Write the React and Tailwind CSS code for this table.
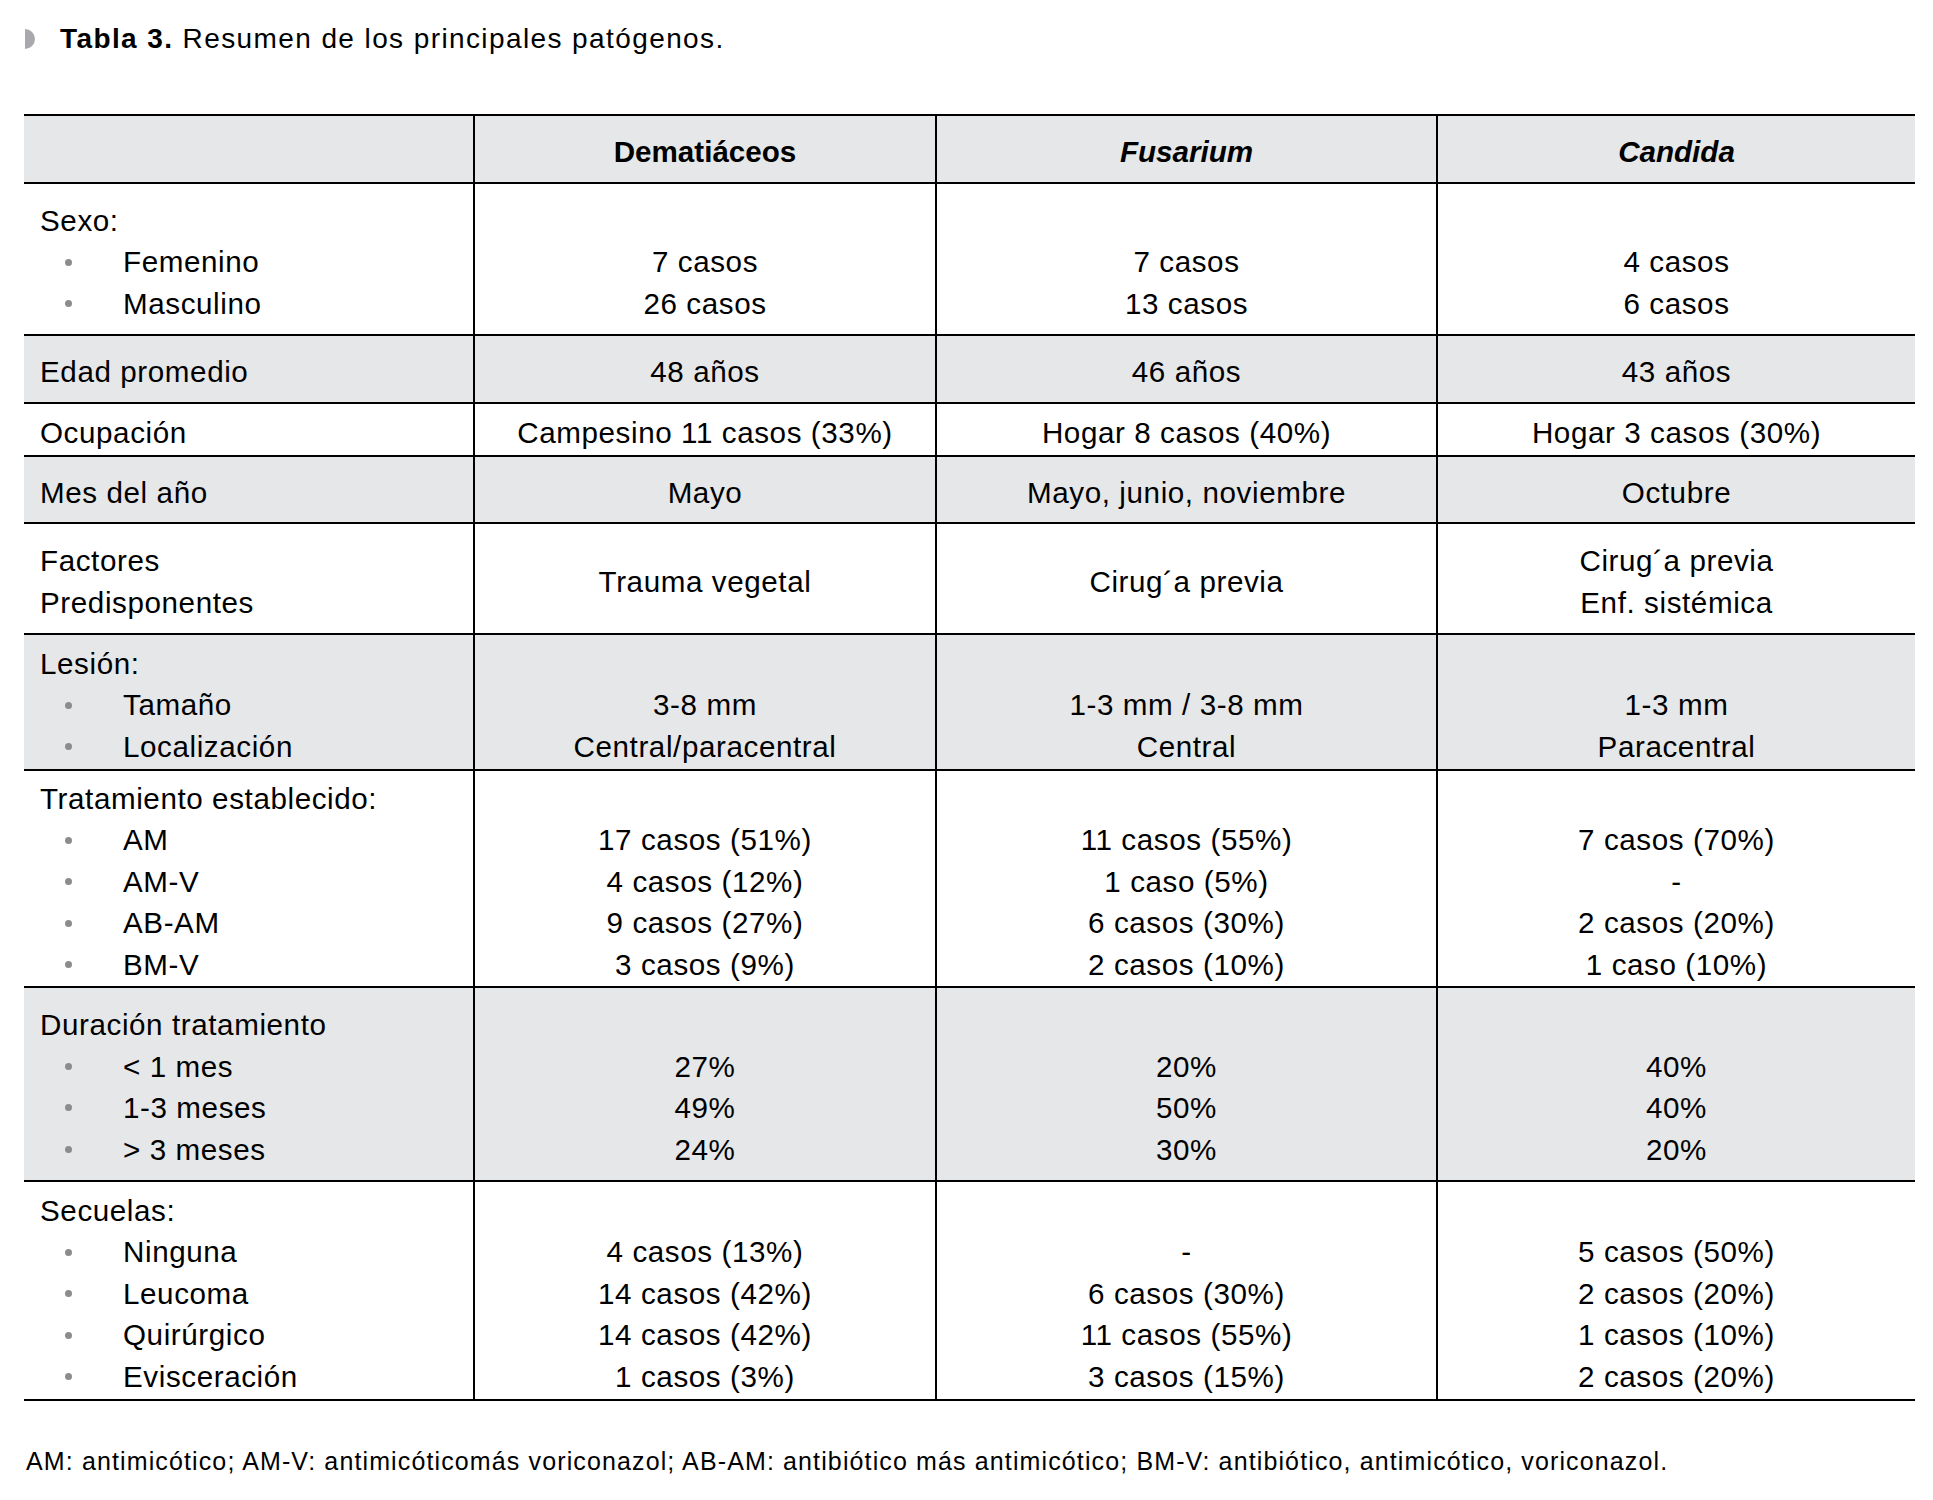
const FILAS = [
  {
    alto: 'h-[152px]',
    fondo: 'bg-white',
    titulo: 'Sexo:',
    items: ['Femenino', 'Masculino'],
    valores: [
      ['7 casos', '26 casos'],
      ['7 casos', '13 casos'],
      ['4 casos', '6 casos'],
    ],
  },
  {
    alto: 'h-[68px]',
    fondo: 'bg-[#e6e7e8]',
    titulo: 'Edad promedio',
    valores: [['48 años'], ['46 años'], ['43 años']],
  },
  {
    alto: 'h-[53px]',
    fondo: 'bg-white',
    titulo: 'Ocupación',
    valores: [['Campesino 11 casos (33%)'], ['Hogar 8 casos (40%)'], ['Hogar 3 casos (30%)']],
  },
  {
    alto: 'h-[67px]',
    fondo: 'bg-[#e6e7e8]',
    titulo: 'Mes del año',
    valores: [['Mayo'], ['Mayo, junio, noviembre'], ['Octubre']],
  },
  {
    alto: 'h-[111px]',
    fondo: 'bg-white',
    lineas: ['Factores', 'Predisponentes'],
    valores: [['Trauma vegetal'], ['Cirug´a previa'], ['Cirug´a previa', 'Enf. sistémica']],
  },
  {
    alto: 'h-[136px]',
    fondo: 'bg-[#e6e7e8]',
    titulo: 'Lesión:',
    items: ['Tamaño', 'Localización'],
    valores: [
      ['3-8 mm', 'Central/paracentral'],
      ['1-3 mm / 3-8 mm', 'Central'],
      ['1-3 mm', 'Paracentral'],
    ],
  },
  {
    alto: 'h-[217px]',
    fondo: 'bg-white',
    titulo: 'Tratamiento establecido:',
    items: ['AM', 'AM-V', 'AB-AM', 'BM-V'],
    valores: [
      ['17 casos (51%)', '4 casos (12%)', '9 casos (27%)', '3 casos (9%)'],
      ['11 casos (55%)', '1 caso (5%)', '6 casos (30%)', '2 casos (10%)'],
      ['7 casos (70%)', '-', '2 casos (20%)', '1 caso (10%)'],
    ],
  },
  {
    alto: 'h-[194px]',
    fondo: 'bg-[#e6e7e8]',
    titulo: 'Duración tratamiento',
    items: ['< 1 mes', '1-3 meses', '> 3 meses'],
    valores: [
      ['27%', '49%', '24%'],
      ['20%', '50%', '30%'],
      ['40%', '40%', '20%'],
    ],
  },
  {
    alto: 'h-[219px]',
    fondo: 'bg-white',
    titulo: 'Secuelas:',
    items: ['Ninguna', 'Leucoma', 'Quirúrgico', 'Evisceración'],
    valores: [
      ['4 casos (13%)', '14 casos (42%)', '14 casos (42%)', '1 casos (3%)'],
      ['-', '6 casos (30%)', '11 casos (55%)', '3 casos (15%)'],
      ['5 casos (50%)', '2 casos (20%)', '1 casos (10%)', '2 casos (20%)'],
    ],
  },
];

const COLUMNAS = 'grid grid-cols-[449px_462px_501px_479px]';

function Vineta({ texto }) {
  return (
    <div className="flex items-center">
      <span className="w-[83px] flex items-center">
        <span className="ml-[25px] w-[7px] h-[7px] rounded-full bg-[#8c8c8c]" />
      </span>
      <span>{texto}</span>
    </div>
  );
}

function Fila({ fila }) {
  // con viñetas, la primera línea de valores queda en blanco
  const conBlanco = !!fila.items;
  return (
    <div className={`${COLUMNAS} ${fila.alto} ${fila.fondo} border-b-2 border-black`}>
      <div className="flex flex-col justify-center pl-4 pt-[6px]">
        {fila.titulo && <div>{fila.titulo}</div>}
        {fila.lineas && fila.lineas.map((l) => <div key={l}>{l}</div>)}
        {fila.items && fila.items.map((it) => <Vineta key={it} texto={it} />)}
      </div>
      {fila.valores.map((col, i) => (
        <div key={i} className="flex flex-col justify-center items-center border-l-2 border-black text-center pt-[6px]">
          {conBlanco && <div>&nbsp;</div>}
          {col.map((v, j) => (
            <div key={j}>{v}</div>
          ))}
        </div>
      ))}
    </div>
  );
}

export default function App() {
  return (
    <div className="w-[1933px] h-[1500px] bg-white text-black font-['Liberation_Sans',Arial,sans-serif] pt-[20px]">
      {/* Título */}
      <div className="h-[38px] flex items-center pl-[25px]">
        <span className="w-[10px] h-[20px] rounded-r-full bg-[#a7a9ac]" />
        <span className="ml-[25px] text-[28px] tracking-[0.05em] leading-none">
          <b>Tabla 3.</b> Resumen de los principales patógenos.
        </span>
      </div>

      {/* Tabla */}
      <div className="mt-[56px] ml-[24px] w-[1891px] border-t-2 border-black text-[29.6px] leading-[41.5px] tracking-[0.02em]">
        <div className={`${COLUMNAS} h-[68px] bg-[#e6e7e8] border-b-2 border-black font-bold tracking-normal`}>
          <div />
          <div className="flex items-center justify-center border-l-2 border-black pt-[5px]">Dematiáceos</div>
          <div className="flex items-center justify-center border-l-2 border-black italic pt-[5px]">Fusarium</div>
          <div className="flex items-center justify-center border-l-2 border-black italic pt-[5px]">Candida</div>
        </div>
        {FILAS.map((f, i) => (
          <Fila key={i} fila={f} />
        ))}
      </div>

      {/* Nota */}
      <div className="mt-[45px] pl-[26px] text-[25px] leading-[30px] tracking-[0.045em]">
        AM: antimicótico; AM-V: antimicóticomás voriconazol; AB-AM: antibiótico más antimicótico; BM-V: antibiótico, antimicótico, voriconazol.
      </div>
    </div>
  );
}
